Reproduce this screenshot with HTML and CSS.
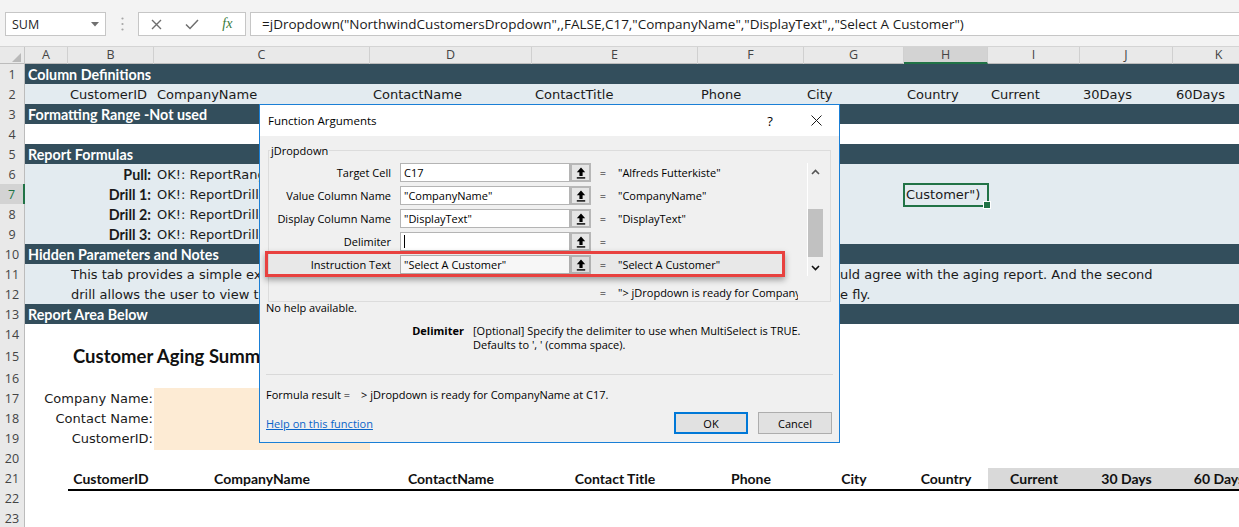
FILE: index.html
```html
<!DOCTYPE html>
<html lang="en">
<head>
<meta charset="utf-8">
<title>Function Arguments</title>
<link rel="stylesheet" href="styles.css">
</head>
<body>
<div class="toolbar">
  <div class="namebox"><span>SUM</span><svg width="8" height="5" viewBox="0 0 8 5"><path d="M0 0H8L4 4.5Z" fill="#707070"/></svg></div>
  <div class="grip"><svg width="3" height="14" viewBox="0 0 3 14"><circle cx="1.5" cy="1.5" r="1.1" fill="#a6a6a6"/><circle cx="1.5" cy="7" r="1.1" fill="#a6a6a6"/><circle cx="1.5" cy="12.5" r="1.1" fill="#a6a6a6"/></svg></div>
  <div class="fbtns">
    <span class="fb"><svg width="11" height="11" viewBox="0 0 11 11"><path d="M1 1L10 10M10 1L1 10" stroke="#6e6e6e" stroke-width="1.4"/></svg></span>
    <span class="fb"><svg width="14" height="11" viewBox="0 0 14 11"><path d="M1 5.5L5 9.5L13 1" fill="none" stroke="#6e6e6e" stroke-width="1.5"/></svg></span>
    <span class="fb fx">fx</span>
  </div>
  <div class="finput">=jDropdown("NorthwindCustomersDropdown",,FALSE,C17,"CompanyName","DisplayText",,"Select A Customer")</div>
</div>

<div class="colhead">
  <div class="corner"><svg width="9" height="9" viewBox="0 0 9 9"><path d="M9 0V9H0Z" fill="#b9b9b9"/></svg></div>
  <div class="ch">A</div><div class="ch">B</div><div class="ch">C</div><div class="ch">D</div><div class="ch">E</div><div class="ch">F</div><div class="ch">G</div><div class="ch sel">H</div><div class="ch">I</div><div class="ch">J</div><div class="ch">K</div>
</div>

<div class="sheet">
  <div class="r dark"><div class="rh">1</div><div class="c all b">Column Definitions</div></div>
  <div class="r light"><div class="rh">2</div><div class="c"></div><div class="c right">CustomerID</div><div class="c">CompanyName</div><div class="c">ContactName</div><div class="c">ContactTitle</div><div class="c">Phone</div><div class="c">City</div><div class="c">Country</div><div class="c">Current</div><div class="c">30Days</div><div class="c">60Days</div></div>
  <div class="r dark"><div class="rh">3</div><div class="c all b">Formatting Range -Not used</div></div>
  <div class="r"><div class="rh">4</div></div>
  <div class="r dark"><div class="rh">5</div><div class="c all b">Report Formulas</div></div>
  <div class="r light"><div class="rh">6</div><div class="c lab b">Pull:</div><div class="c">OK!: ReportRange 'Customers'</div></div>
  <div class="r light"><div class="rh sel">7</div><div class="c lab b">Drill 1:</div><div class="c">OK!: ReportDrill 'Orders'</div><div class="c active">Customer")</div></div>
  <div class="r light"><div class="rh">8</div><div class="c lab b">Drill 2:</div><div class="c">OK!: ReportDrill 'Details'</div></div>
  <div class="r light"><div class="rh">9</div><div class="c lab b">Drill 3:</div><div class="c">OK!: ReportDrill 'Invoices'</div></div>
  <div class="r dark"><div class="rh">10</div><div class="c all b">Hidden Parameters and Notes</div></div>
  <div class="r light"><div class="rh">11</div><div class="c note">This tab provides a simple example of a customer aging report. The first drill shows totals that wo</div><div class="c tail">uld agree with the aging report. And the second</div></div>
  <div class="r light"><div class="rh">12</div><div class="c note">drill allows the user to view the invoice detail and change the selection on th</div><div class="c tail">e fly.</div></div>
  <div class="r dark"><div class="rh">13</div><div class="c all b">Report Area Below</div></div>
  <div class="r"><div class="rh">14</div></div>
  <div class="r tall"><div class="rh">15</div><div class="c title">Customer Aging Summary</div></div>
  <div class="r"><div class="rh">16</div></div>
  <div class="r"><div class="rh">17</div><div class="c flab">Company Name:</div><div class="c peach"></div></div>
  <div class="r"><div class="rh">18</div><div class="c flab">Contact Name:</div><div class="c peach"></div></div>
  <div class="r"><div class="rh">19</div><div class="c flab">CustomerID:</div><div class="c peach"></div></div>
  <div class="r"><div class="rh">20</div></div>
  <div class="r"><div class="rh">21</div><div class="c"></div><div class="c hd">CustomerID</div><div class="c hd">CompanyName</div><div class="c hd">ContactName</div><div class="c hd">Contact Title</div><div class="c hd">Phone</div><div class="c hd">City</div><div class="c hd">Country</div><div class="c hd gray">Current</div><div class="c hd gray">30 Days</div><div class="c hd gray">60 Days</div></div>
  <div class="r"><div class="rh">22</div></div>
  <div class="r"><div class="rh">23</div></div>
</div>

<div class="dlg">
  <div class="dtitle">
    <span class="ttl">Function Arguments</span>
    <div class="tbtns">
      <span class="tb q">?</span>
      <span class="tb"><svg width="11" height="11" viewBox="0 0 11 11"><path d="M0.5 0.5L10.5 10.5M10.5 0.5L0.5 10.5" stroke="#1a1a1a" stroke-width="1"/></svg></span>
    </div>
  </div>
  <div class="dbody">
    <fieldset class="grp">
      <legend>jDropdown</legend>
      <div class="args">
        <div class="arglist">
          <div class="arg"><span class="alab">Target Cell</span><span class="ain">C17</span><span class="abtn"><svg width="10" height="12" viewBox="0 0 10 12"><path d="M5 0.5L0.8 5.2H3.4V9H6.6V5.2H9.2Z" fill="#000"/><rect x="0.8" y="10.2" width="8.4" height="1.4" fill="#000"/></svg></span><span class="aeq">=</span><span class="aval">"Alfreds Futterkiste"</span></div>
          <div class="arg"><span class="alab">Value Column Name</span><span class="ain">"CompanyName"</span><span class="abtn"><svg width="10" height="12" viewBox="0 0 10 12"><path d="M5 0.5L0.8 5.2H3.4V9H6.6V5.2H9.2Z" fill="#000"/><rect x="0.8" y="10.2" width="8.4" height="1.4" fill="#000"/></svg></span><span class="aeq">=</span><span class="aval">"CompanyName"</span></div>
          <div class="arg"><span class="alab">Display Column Name</span><span class="ain">"DisplayText"</span><span class="abtn"><svg width="10" height="12" viewBox="0 0 10 12"><path d="M5 0.5L0.8 5.2H3.4V9H6.6V5.2H9.2Z" fill="#000"/><rect x="0.8" y="10.2" width="8.4" height="1.4" fill="#000"/></svg></span><span class="aeq">=</span><span class="aval">"DisplayText"</span></div>
          <div class="arg"><span class="alab">Delimiter</span><span class="ain"><span class="caret"></span></span><span class="abtn"><svg width="10" height="12" viewBox="0 0 10 12"><path d="M5 0.5L0.8 5.2H3.4V9H6.6V5.2H9.2Z" fill="#000"/><rect x="0.8" y="10.2" width="8.4" height="1.4" fill="#000"/></svg></span><span class="aeq">=</span><span class="aval"></span></div>
          <div class="arg"><span class="alab">Instruction Text</span><span class="ain">"Select A Customer"</span><span class="abtn"><svg width="10" height="12" viewBox="0 0 10 12"><path d="M5 0.5L0.8 5.2H3.4V9H6.6V5.2H9.2Z" fill="#000"/><rect x="0.8" y="10.2" width="8.4" height="1.4" fill="#000"/></svg></span><span class="aeq">=</span><span class="aval">"Select A Customer"</span></div>
        </div>
        <div class="vscroll">
          <div class="vsb"><svg width="9" height="6" viewBox="0 0 9 6"><path d="M1 5L4.5 1.5L8 5" fill="none" stroke="#555" stroke-width="1.6"/></svg></div>
          <div class="vtrack"><div class="vthumb"></div></div>
          <div class="vsb"><svg width="9" height="6" viewBox="0 0 9 6"><path d="M1 1L4.5 4.5L8 1" fill="none" stroke="#111" stroke-width="1.6"/></svg></div>
        </div>
      </div>
      <div class="res"><span class="aeq">=</span><span class="aval clip">"&gt; jDropdown is ready for CompanyName at C17."</span></div>
    </fieldset>
    <div class="nohelp">No help available.</div>
    <div class="desc"><span class="dlab">Delimiter</span><span class="dtext">[Optional] Specify the delimiter to use when MultiSelect is TRUE.<br>Defaults to ', ' (comma space).</span></div>
    <div class="sep"></div>
    <div class="fres"><span>Formula result =</span><span class="fval">&gt; jDropdown is ready for CompanyName at C17.</span></div>
    <div class="foot">
      <span class="help">Help on this function</span>
      <div class="btns"><span class="btn ok">OK</span><span class="btn">Cancel</span></div>
    </div>
  </div>
  <div class="hl"></div>
</div>
</body>
</html>
```

FILE: styles.css
```css
:root {
  --cols: 25px 43px 86px 216px 162px 166px 106px 100px 84px 92px 93px 92px;
  --dark: #334e5c;
  --light: #e3ebf0;
}
* { box-sizing: border-box; margin: 0; padding: 0; }
html, body { width: 1239px; height: 527px; overflow: hidden; }
body { position: relative; background: #fff; font-family: "DejaVu Sans", sans-serif; color: #1a1a1a; }

/* toolbar */
.toolbar { display: flex; align-items: flex-start; height: 47px; padding-top: 12px; background: #f3f3f3; border-bottom: 1px solid #d4d4d4; }
.namebox { margin-left: 5px; width: 101px; height: 24px; background: #fff; border: 1px solid #c6c6c6; display: flex; align-items: center; justify-content: space-between; padding: 0 6px 0 6px; font: 12.5px "Open Sans", sans-serif; color: #262626; }
.grip { width: 32px; height: 24px; display: flex; align-items: center; justify-content: center; }
.fbtns { width: 108px; height: 24px; background: #fff; border: 1px solid #c6c6c6; display: flex; align-items: center; }
.fb { width: 36px; height: 22px; display: flex; align-items: center; justify-content: center; }
.fx { font: italic 14px "Liberation Serif", serif; color: #3a7a3a; }
.finput { flex: 1; margin-left: 4px; margin-right: -2px; height: 24px; background: #fff; border: 1px solid #c6c6c6; padding-left: 11px; font: 13.5px/22px "Open Sans", sans-serif; white-space: nowrap; color: #1a1a1a; }

/* column headers */
.colhead { display: grid; grid-template-columns: var(--cols); height: 17px; background: #e9e9e9; border-bottom: 1px solid #bcbcbc; }
.corner { display: flex; align-items: flex-end; justify-content: flex-end; padding: 0 3px 2px 0; border-right: 1px solid #c6c6c6; }
.ch { font: 12.5px/16px "Open Sans", sans-serif; color: #444; text-align: center; border-right: 1px solid #d0d0d0; }
.ch.sel { background: #d3d3d3; border-bottom: 2px solid #217346; line-height: 15px; }

/* rows */
.r { display: grid; grid-template-columns: var(--cols); height: 20px; font-size: 13px; line-height: 22px; white-space: nowrap; }
.r.tall { height: 24px; line-height: 25px; }
.rh { font: 12.5px/21px "Open Sans", sans-serif; color: #444; background: #e9e9e9; text-align: center; border-right: 1px solid #bcbcbc; border-bottom: 1px solid #d6d6d6; }
.tall .rh { line-height: 25px; }
.rh.sel { background: #d3d3d3; color: #217346; border-right: 2px solid #217346; }
.dark { background: var(--dark); color: #fff; }
.light { background: var(--light); }
.c { padding-left: 3px; }
.all { grid-column: 2 / -1; }
.b { font-family: Lato, sans-serif; font-weight: 700; font-size: 14.3px; }
.right { text-align: right; padding: 0 7px 0 0; }
.lab { grid-column: 2 / 4; text-align: right; padding: 0 3px 0 0; }
.active { grid-column: 9; position: relative; padding-left: 2px; outline: 2px solid #217346; outline-offset: -1px; }
.active::after { content: ""; position: absolute; right: -3px; bottom: -3px; width: 6px; height: 6px; background: #217346; border: 1px solid #fff; }
.note { grid-column: 3 / 8; overflow: hidden; }
.tail { grid-column: 8 / -1; padding-left: 36px; }
.title { grid-column: 3 / -1; padding-left: 5px; font-family: Lato, sans-serif; font-weight: 700; font-size: 18.5px; color: #111; }
.flab { grid-column: 2 / 4; text-align: right; padding: 0 1px 0 0; }
.peach { grid-column: 4; background: #fdebd4; padding: 0; }
.hd { text-align: center; padding: 0; font-family: Lato, sans-serif; font-weight: 700; font-size: 14px; line-height: 21px; color: #111; border-bottom: 2px solid #000; }
.hd.gray { background: #d9d9d9; }

/* dialog */
.dlg { position: absolute; left: 259px; top: 104px; width: 581px; height: 339px; background: #f0f0f0; border: 1px solid #1a7fd6; font: 11px "Open Sans", sans-serif; color: #000; }
.dtitle { height: 31px; background: #fff; display: flex; align-items: center; justify-content: space-between; }
.ttl { padding-left: 8px; font-size: 11.5px; }
.tbtns { display: flex; }
.tb { width: 46px; height: 31px; display: flex; align-items: center; justify-content: center; }
.q { font-size: 13px; }
.dbody { padding: 7px 6px 0 6px; }
.grp { border: 1px solid #dcdcdc; margin: 0 2px 0 2px; padding: 0; }
.grp legend { margin-left: 1px; padding: 0 1px; line-height: 15px; }
.args { display: flex; margin-top: 5px; }
.arglist { width: 538px; }
.arg { display: flex; align-items: center; height: 19px; margin-bottom: 4px; white-space: nowrap; }
.arg:last-child { margin-bottom: 0; }
.alab { width: 122px; text-align: right; margin-right: 9px; }
.ain { width: 170px; height: 19px; background: #fff; border: 1px solid #b4b4b4; padding-left: 3px; line-height: 17px; white-space: nowrap; overflow: hidden; display: flex; align-items: center; }
.caret { display: inline-block; width: 1px; height: 13px; background: #000; }
.abtn { width: 21px; height: 19px; background: #e6e6e6; border: 2px solid #b7b7b7; display: flex; align-items: center; justify-content: center; }
.aeq { width: 24px; text-align: center; }
.aval { padding-left: 3px; white-space: nowrap; }
.vscroll { width: 16px; height: 113px; border-left: 1px solid #fff; display: flex; flex-direction: column; }
.vsb { height: 17px; display: flex; align-items: center; justify-content: center; }
.vtrack { flex: 1; }
.vthumb { margin-top: 29px; height: 48px; background: #c1c1c1; }
.res { display: flex; height: 16px; line-height: 16px; margin-top: 9px; padding-left: 322px; }
.clip { width: 183px; overflow: hidden; }
.nohelp { margin-top: -1px; line-height: 14px; }
.desc { display: flex; margin-top: 9px; line-height: 14px; }
.dlab { width: 198px; text-align: right; font-weight: 700; margin-right: 9px; }
.sep { margin-top: 22px; height: 1px; background: #d9d9d9; }
.fres { margin-top: 13px; line-height: 14px; display: flex; white-space: nowrap; }
.fval { margin-left: 11px; }
.foot { margin-top: 10px; margin-right: 1px; height: 22px; display: flex; align-items: center; justify-content: space-between; }
.help { color: #0a64c8; text-decoration: underline; }
.btns { display: flex; gap: 10px; }
.btn { width: 74px; height: 22px; display: flex; align-items: center; justify-content: center; background: #e1e1e1; border: 1px solid #adadad; }
.btn.ok { border: 2px solid #0078d7; }
.hl { position: absolute; left: 5px; top: 146px; width: 520px; height: 26px; border: 3px solid #e8413f; box-shadow: 0 3px 6px rgba(0,0,0,.35); background: rgba(0,0,0,.03); }
```
